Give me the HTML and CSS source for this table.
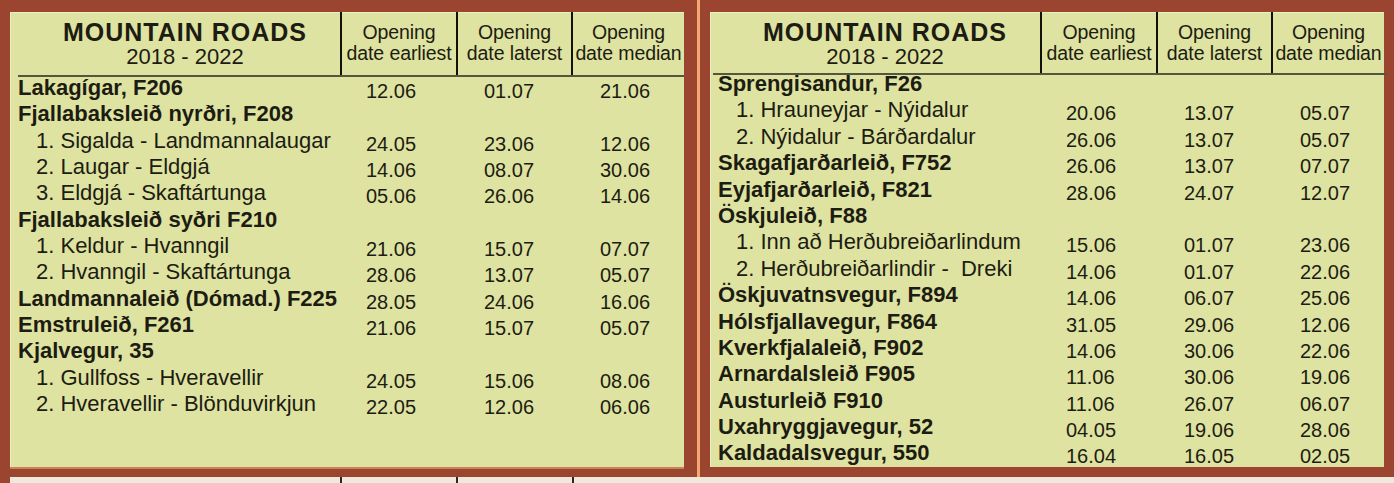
FILE: index.html
```html
<!DOCTYPE html>
<html lang="is">
<head>
<meta charset="utf-8">
<title>Mountain Roads</title>
<link rel="stylesheet" href="styles.css">
</head>
<body>
<div class="page">
  <div class="panels">
    <section class="panel panel-left">
      <div class="head">
        <div class="title-cell">
          <div class="title">MOUNTAIN ROADS</div>
          <div class="years">2018 - 2022</div>
        </div>
        <div class="col-head">Opening<br>date earliest</div>
        <div class="col-head">Opening<br>date laterst</div>
        <div class="col-head">Opening<br>date median</div>
      </div>
      <div class="rows">
        <div class="row"><span class="lbl main">Lakagígar, F206</span><span class="n n1">12.06</span><span class="n n2">01.07</span><span class="n n3">21.06</span></div>
        <div class="row"><span class="lbl main">Fjallabaksleið nyrðri, F208</span><span class="n n1"></span><span class="n n2"></span><span class="n n3"></span></div>
        <div class="row"><span class="lbl sub">1. Sigalda - Landmannalaugar</span><span class="n n1">24.05</span><span class="n n2">23.06</span><span class="n n3">12.06</span></div>
        <div class="row"><span class="lbl sub">2. Laugar - Eldgjá</span><span class="n n1">14.06</span><span class="n n2">08.07</span><span class="n n3">30.06</span></div>
        <div class="row"><span class="lbl sub">3. Eldgjá - Skaftártunga</span><span class="n n1">05.06</span><span class="n n2">26.06</span><span class="n n3">14.06</span></div>
        <div class="row"><span class="lbl main">Fjallabaksleið syðri F210</span><span class="n n1"></span><span class="n n2"></span><span class="n n3"></span></div>
        <div class="row"><span class="lbl sub">1. Keldur - Hvanngil</span><span class="n n1">21.06</span><span class="n n2">15.07</span><span class="n n3">07.07</span></div>
        <div class="row"><span class="lbl sub">2. Hvanngil - Skaftártunga</span><span class="n n1">28.06</span><span class="n n2">13.07</span><span class="n n3">05.07</span></div>
        <div class="row"><span class="lbl main">Landmannaleið (Dómad.) F225</span><span class="n n1">28.05</span><span class="n n2">24.06</span><span class="n n3">16.06</span></div>
        <div class="row"><span class="lbl main">Emstruleið, F261</span><span class="n n1">21.06</span><span class="n n2">15.07</span><span class="n n3">05.07</span></div>
        <div class="row"><span class="lbl main">Kjalvegur, 35</span><span class="n n1"></span><span class="n n2"></span><span class="n n3"></span></div>
        <div class="row"><span class="lbl sub">1. Gullfoss - Hveravellir</span><span class="n n1">24.05</span><span class="n n2">15.06</span><span class="n n3">08.06</span></div>
        <div class="row"><span class="lbl sub">2. Hveravellir - Blönduvirkjun</span><span class="n n1">22.05</span><span class="n n2">12.06</span><span class="n n3">06.06</span></div>
      </div>
    </section>
    <div class="divider"></div>
    <section class="panel panel-right">
      <div class="head">
        <div class="title-cell">
          <div class="title">MOUNTAIN ROADS</div>
          <div class="years">2018 - 2022</div>
        </div>
        <div class="col-head">Opening<br>date earliest</div>
        <div class="col-head">Opening<br>date laterst</div>
        <div class="col-head">Opening<br>date median</div>
      </div>
      <div class="rows">
        <div class="row"><span class="lbl main">Sprengisandur, F26</span><span class="n n1"></span><span class="n n2"></span><span class="n n3"></span></div>
        <div class="row"><span class="lbl sub">1. Hrauneyjar - Nýidalur</span><span class="n n1">20.06</span><span class="n n2">13.07</span><span class="n n3">05.07</span></div>
        <div class="row"><span class="lbl sub">2. Nýidalur - Bárðardalur</span><span class="n n1">26.06</span><span class="n n2">13.07</span><span class="n n3">05.07</span></div>
        <div class="row"><span class="lbl main">Skagafjarðarleið, F752</span><span class="n n1">26.06</span><span class="n n2">13.07</span><span class="n n3">07.07</span></div>
        <div class="row"><span class="lbl main">Eyjafjarðarleið, F821</span><span class="n n1">28.06</span><span class="n n2">24.07</span><span class="n n3">12.07</span></div>
        <div class="row"><span class="lbl main">Öskjuleið, F88</span><span class="n n1"></span><span class="n n2"></span><span class="n n3"></span></div>
        <div class="row"><span class="lbl sub">1. Inn að Herðubreiðarlindum</span><span class="n n1">15.06</span><span class="n n2">01.07</span><span class="n n3">23.06</span></div>
        <div class="row"><span class="lbl sub">2. Herðubreiðarlindir -&nbsp; Dreki</span><span class="n n1">14.06</span><span class="n n2">01.07</span><span class="n n3">22.06</span></div>
        <div class="row"><span class="lbl main">Öskjuvatnsvegur, F894</span><span class="n n1">14.06</span><span class="n n2">06.07</span><span class="n n3">25.06</span></div>
        <div class="row"><span class="lbl main">Hólsfjallavegur, F864</span><span class="n n1">31.05</span><span class="n n2">29.06</span><span class="n n3">12.06</span></div>
        <div class="row"><span class="lbl main">Kverkfjalaleið, F902</span><span class="n n1">14.06</span><span class="n n2">30.06</span><span class="n n3">22.06</span></div>
        <div class="row"><span class="lbl main">Arnardalsleið F905</span><span class="n n1">11.06</span><span class="n n2">30.06</span><span class="n n3">19.06</span></div>
        <div class="row"><span class="lbl main">Austurleið F910</span><span class="n n1">11.06</span><span class="n n2">26.07</span><span class="n n3">06.07</span></div>
        <div class="row"><span class="lbl main">Uxahryggjavegur, 52</span><span class="n n1">04.05</span><span class="n n2">19.06</span><span class="n n3">28.06</span></div>
        <div class="row"><span class="lbl main">Kaldadalsvegur, 550</span><span class="n n1">16.04</span><span class="n n2">16.05</span><span class="n n3">02.05</span></div>
      </div>
    </section>
  </div>
  <div class="strip">
    <span class="tick"></span><span class="tick"></span><span class="tick"></span>
  </div>
</div>
</body>
</html>
```

FILE: styles.css
```css
html, body {
  margin: 0;
  padding: 0;
}
body {
  width: 1394px;
  height: 483px;
  overflow: hidden;
  background: #9b4531;
  font-family: "Liberation Sans", Arial, sans-serif;
  color: #1d1c12;
}
.page {
  display: flex;
  flex-direction: column;
  height: 483px;
}
.panels {
  display: flex;
  padding: 12px 10px 0 10px;
  height: 456px;
}
.panel {
  width: 674px;
  height: 455px;
  background: #dee3a1;
  box-shadow: inset 1px 1px 0 #ecefc2;
  display: flex;
  flex-direction: column;
}
.panel-left {
  box-shadow: inset 1px 1px 0 #ecefc2, 0 2px 0 #c98258;
}
.divider {
  width: 26px;
  display: flex;
  justify-content: center;
}
.divider::before {
  content: "";
  display: block;
  width: 3px;
  margin-left: 3px;
  height: 483px;
  margin-top: -12px;
  background: #f2aa72;
}
.head {
  display: grid;
  grid-template-columns: 330px 116px 115px 113px;
  height: 63px;
  position: relative;
}
.head::after {
  content: "";
  position: absolute;
  left: 8px;
  right: 0;
  bottom: -2px;
  height: 2px;
  background: #56563f;
}
.panel-right .head {
  height: 61px;
}
.panel-right .head::after {
  left: 3px;
  right: -3px;
}
.title-cell {
  text-align: center;
  padding-top: 6px;
  padding-left: 20px;
}
.title {
  font-weight: bold;
  font-size: 25px;
  line-height: 28px;
  letter-spacing: 1px;
}
.years {
  font-size: 22px;
  line-height: 22px;
}
.col-head {
  border-left: 2.5px solid #111108;
  text-align: center;
  font-size: 19.5px;
  line-height: 21px;
  padding-top: 10px;
  white-space: nowrap;
  letter-spacing: -0.1px;
}
.rows {
  display: flex;
  flex-direction: column;
}
.panel-right .rows {
  margin-top: -2px;
}
.row {
  display: grid;
  grid-template-columns: 330px 116px 115px 113px;
  height: 26.33px;
  line-height: 26px;
  white-space: nowrap;
}
.panel-right .row {
  height: 26.4px;
}
.lbl {
  font-size: 22px;
}
.lbl.main {
  font-weight: bold;
  padding-left: 8px;
}
.lbl.sub {
  padding-left: 26px;
}
.n {
  font-size: 20px;
  padding-top: 3px;
}
.n1 { padding-left: 26px; }
.n2 { padding-left: 28px; }
.n3 { padding-left: 29px; }
.strip {
  margin-top: 9px;
  margin-left: 10px;
  height: 6px;
  background: #efe9dc;
  display: flex;
  padding-left: 330px;
}
.tick {
  width: 2px;
  height: 6px;
  background: #2a2a20;
}
.tick + .tick {
  margin-left: 114px;
}
```
